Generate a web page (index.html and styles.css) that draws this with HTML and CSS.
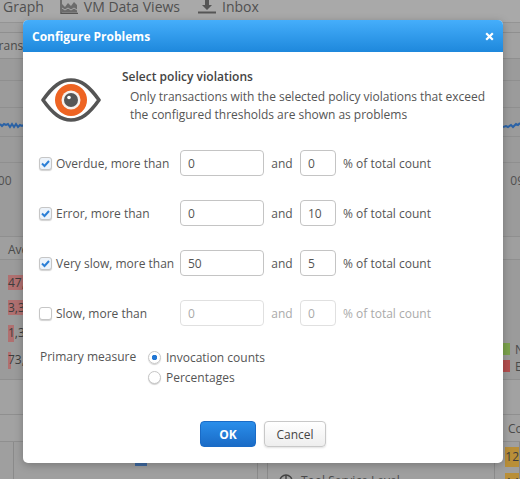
FILE: index.html
```html
<!DOCTYPE html>
<html lang="en">
<head>
    <meta charset="UTF-8">
    <meta name="viewport" content="width=device-width, initial-scale=1.0">
    <title>Configure Problems</title>
    <link rel="stylesheet" href="styles.css">
</head>
<body>
    <div class="app">
        <nav class="nav">
            <span class="nav-item nav-graph">Graph</span>
            <span class="nav-item nav-views">
                <svg class="nav-icon" width="18" height="14" viewBox="0 0 18 14">
                    <path d="M1 0v13.5h17" fill="none" stroke="#555" stroke-width="1.4"/>
                    <path d="M2 4l3 3 3-4 3 3 3-4 3 3v7.500H2z" fill="#6b6b6b"/>
                    <path d="M2 8l3 2 3-2 3 2 3-2 3 2" fill="none" stroke="#aaa" stroke-width="1"/>
                </svg>
                VM Data Views
            </span>
            <span class="nav-item">
                <svg class="nav-icon" width="18" height="14" viewBox="0 0 18 14">
                    <path d="M7 0h4v5h3l-5 5-5-5h3z" fill="#555"/>
                    <path d="M0 11.500h18v2H0z" fill="#555"/>
                </svg>
                Inbox
            </span>
        </nav>
        <div class="strip strip-tabs"></div>
        <div class="strip strip-title"><span class="clip-left">Transactions</span></div>
        <div class="strip strip-a"></div>
        <div class="strip strip-b"></div>
        <div class="strip strip-chart">
            <svg width="24" height="14" viewBox="0 0 24 14">
                <path d="M0 6l2 2 2-2 2 1 2-1 2 3 2-3 2 3 2-3 2 3 2-2 2 1 2-1" fill="none" stroke="#2a62a6" stroke-width="2"/>
            </svg>
            <svg width="17" height="14" viewBox="0 0 17 14">
                <path d="M0 9l3-1 2 1 3-2 2 2 3-3 2 1 2-2" fill="none" stroke="#2a62a6" stroke-width="2"/>
            </svg>
        </div>
        <div class="strip strip-c"></div>
        <div class="strip strip-axis">
            <span class="axis-left">100</span>
            <span class="axis-right">09</span>
        </div>
        <div class="strip strip-head"><span class="head-left">Average</span></div>
        <div class="strip strip-table">
            <div class="bars">
                <div class="bar bar-full">47,2</div>
                <div class="bar bar-full">3,37</div>
                <div class="bar bar-small">1,30</div>
                <div class="bar bar-tiny">73,5</div>
                <div class="bar bar-tiny bar-last"></div>
            </div>
            <div class="legend">
                <div class="legend-row"><span class="swatch swatch-green"></span>N</div>
                <div class="legend-row"><span class="swatch swatch-red"></span>E</div>
            </div>
        </div>
        <div class="strip strip-gap"></div>
        <div class="strip strip-foot"><span class="foot-right">Count</span></div>
        <div class="lower">
            <div class="col col-a"></div>
            <div class="col col-b"><span class="spark"></span></div>
            <div class="col col-c">
                <svg class="tool-icon" width="14" height="14" viewBox="0 0 14 14">
                    <circle cx="7" cy="7" r="6" fill="none" stroke="#444" stroke-width="1.500"/>
                    <path d="M7 1v6" stroke="#444" stroke-width="1.500"/>
                </svg>
                Tool Service Level
            </div>
            <div class="col col-d">
                <span class="count">12</span>
                <span class="count">14</span>
            </div>
        </div>
    </div>

    <div class="modal">
        <div class="modal-header">
            <span class="modal-title">Configure Problems</span>
            <svg class="modal-close" width="9" height="9" viewBox="0 0 9 9">
                <path d="M1.200 1.200l6.600 6.600M7.800 1.200L1.200 7.800" stroke="#fff" stroke-width="2.200"/>
            </svg>
        </div>
        <div class="modal-body">
            <div class="intro">
                <svg class="eye" width="60" height="44" viewBox="0 0 60 44">
                    <path d="M2 22C12 8 20 2 30 2s18 6 28 20C48 36 40 42 30 42S12 36 2 22z" fill="#fff" stroke="#555" stroke-width="3.600" stroke-linejoin="round"/>
                    <circle cx="30" cy="22" r="16" fill="#ee6423"/>
                    <circle cx="30" cy="22" r="9.500" fill="#f6f1ee"/>
                    <circle cx="30" cy="22" r="7" fill="#565656"/>
                    <circle cx="28" cy="19.500" r="1.800" fill="#fff"/>
                </svg>
                <div class="intro-text">
                    <h2>Select policy violations</h2>
                    <p>Only transactions with the selected policy violations that exceed the configured thresholds are shown as problems</p>
                </div>
            </div>

            <div class="rule">
                <label class="rule-label"><input type="checkbox" checked>Overdue, more than</label>
                <input class="field field-wide" type="text" value="0">
                <span class="rule-and">and</span>
                <input class="field field-narrow" type="text" value="0">
                <span>% of total count</span>
            </div>
            <div class="rule">
                <label class="rule-label"><input type="checkbox" checked>Error, more than</label>
                <input class="field field-wide" type="text" value="0">
                <span class="rule-and">and</span>
                <input class="field field-narrow" type="text" value="10">
                <span>% of total count</span>
            </div>
            <div class="rule">
                <label class="rule-label"><input type="checkbox" checked>Very slow, more than</label>
                <input class="field field-wide" type="text" value="50">
                <span class="rule-and">and</span>
                <input class="field field-narrow" type="text" value="5">
                <span>% of total count</span>
            </div>
            <div class="rule rule-off">
                <label class="rule-label"><input type="checkbox">Slow, more than</label>
                <input class="field field-wide" type="text" value="0" disabled>
                <span class="rule-and">and</span>
                <input class="field field-narrow" type="text" value="0" disabled>
                <span>% of total count</span>
            </div>

            <div class="measure">
                <span class="measure-title">Primary measure</span>
                <div class="measure-options">
                    <label><input type="radio" name="measure" checked>Invocation counts</label>
                    <label><input type="radio" name="measure">Percentages</label>
                </div>
            </div>
        </div>
        <div class="modal-footer">
            <button class="btn btn-primary">OK</button>
            <button class="btn btn-default">Cancel</button>
        </div>
    </div>
</body>
</html>
```

FILE: styles.css
```css
* {
    box-sizing: border-box;
}
html, body {
    height: 100%;
}
body {
    margin: 0;
    overflow: hidden;
    position: relative;
    font-family: 'Open Sans', sans-serif;
    font-size: 12px;
    color: #555;
    background-color: #9b9b9b;
}

/* dimmed page behind the dialog */
.app {
    height: 479px;
    display: flex;
    flex-direction: column;
    overflow: hidden;
    color: #4a4a4a;
}
.nav {
    height: 23px;
    flex: none;
    display: flex;
    align-items: flex-start;
    padding-left: 3px;
    background-color: #a9a9a9;
    border-bottom: 1px solid #949494;
    font-size: 14px;
    line-height: 14px;
    color: #505050;
    overflow: hidden;
}
.nav-item {
    display: flex;
    align-items: flex-start;
    gap: 6px;
    margin-right: 18px;
}
.nav-graph {
    margin-right: 16px;
}
.nav-icon {
    flex: none;
}
.strip {
    flex: none;
    display: flex;
    justify-content: space-between;
    border-bottom: 1px solid #8f8f8f;
}
.strip-tabs { height: 10px; background-color: #a2a2a2; }
.strip-title { height: 26px; background-color: #a2a2a2; align-items: center; }
.strip-a { height: 22px; }
.strip-b { height: 27px; }
.strip-chart { height: 29px; align-items: center; padding-top: 6px; }
.strip-c { height: 26px; }
.strip-axis { height: 74px; padding-top: 9px; font-size: 12px; line-height: 18px; color: #505050; }
.strip-head { height: 23px; padding-top: 3px; align-items: center; background-color: #9f9f9f; }
.strip-table { height: 120px; }
.strip-gap { height: 35px; background-color: #a2a2a2; }
.strip-foot { height: 27px; align-items: center; justify-content: flex-end; background-color: #a2a2a2; }
.clip-left {
    margin-left: -8px;
}
.axis-left {
    margin-left: -9px;
}
.axis-right {
    margin-right: -4px;
}
.head-left {
    margin-left: 8px;
}
.foot-right {
    width: 12px;
    white-space: nowrap;
}

.bars {
    width: 23px;
    padding: 15px 0 0 8px;
    overflow: hidden;
    flex: none;
}
.bar {
    height: 15px;
    margin-bottom: 10px;
    line-height: 15px;
    white-space: nowrap;
    color: #3d3d3d;
    background-color: #b07070;
}
.bar-full { width: 15px; }
.bar-small { width: 6px; height: 17px; }
.bar-tiny { width: 3px; height: 17px; }
.bar-last { height: 5px; margin-bottom: 0; }
.legend {
    width: 17px;
    padding-top: 83px;
    overflow: hidden;
}
.legend-row {
    display: flex;
    align-items: center;
    gap: 5px;
    height: 12px;
    margin-bottom: 5px;
}
.swatch {
    width: 7px;
    height: 12px;
    flex: none;
}
.swatch-green { background-color: #7ba24c; }
.swatch-red { background-color: #b34e4e; }

.lower {
    flex: 1;
    display: flex;
    background-color: #9f9f9f;
}
.col {
    border-right: 1px solid #8a8a8a;
}
.col-a { width: 14px; }
.col-b {
    width: 245px;
    padding: 21px 0 0 121px;
}
.spark {
    display: block;
    width: 12px;
    height: 3px;
    background-color: #3f6aa0;
}
.col-c {
    width: 230px;
    margin-left: 9px;
    border-left: 1px solid #8a8a8a;
    padding: 32px 0 0 11px;
    display: flex;
    gap: 8px;
    line-height: 14px;
    white-space: nowrap;
    overflow: hidden;
}
.tool-icon {
    flex: none;
}
.col-d {
    flex: 1;
    padding: 5px 0 0 10px;
    display: flex;
    flex-direction: column;
    gap: 6px;
}
.count {
    height: 20px;
    line-height: 20px;
    background-color: #b98f38;
    color: #3d3d3d;
    white-space: nowrap;
}

/* dialog */
.modal {
    position: absolute;
    left: 23px;
    top: 20px;
    width: 480px;
    height: 443px;
    display: flex;
    flex-direction: column;
    background-color: #fff;
    border-radius: 5px;
    overflow: hidden;
    box-shadow: 0 2px 8px rgba(0, 0, 0, 0.25);
}
.modal-header {
    height: 32px;
    flex: none;
    display: flex;
    justify-content: space-between;
    align-items: center;
    padding: 0 9px;
    background: linear-gradient(to bottom, #45aefb, #1e88dc);
}
.modal-title {
    color: #fff;
    font-size: 12px;
    font-weight: 700;
}
.modal-close {
    display: block;
}
.modal-body {
    flex: 1;
    padding: 16px 17px 0 16px;
}
.intro {
    display: flex;
    align-items: flex-start;
    height: 82px;
}
.eye {
    margin: 10px 21px 0 2px;
    flex: none;
}
.intro-text h2 {
    margin: 0;
    font-size: 12px;
    line-height: 18px;
    font-weight: 600;
    color: #444;
}
.intro-text p {
    margin: 2px 0 0 8px;
    line-height: 18px;
    width: 366px;
    letter-spacing: -0.02px;
}
.rule {
    height: 26px;
    margin-bottom: 24px;
    display: flex;
    align-items: center;
}
.rule-label {
    width: 141px;
    flex: none;
    display: flex;
    align-items: center;
    white-space: nowrap;
}
.rule-and {
    width: 36px;
    text-align: center;
}
.field {
    height: 26px;
    padding: 0 7px;
    font-family: inherit;
    font-size: 12px;
    color: #555;
    background-color: #fff;
    border: 1px solid #c4c4c4;
    border-radius: 4px;
    outline: none;
}
.field-wide {
    width: 84px;
}
.field-narrow {
    width: 36px;
    margin-right: 7px;
}
.rule-off {
    color: #aaa;
}
.rule-off .rule-label {
    color: #555;
}
.rule-off .field {
    color: #aaa;
    border-color: #e0e0e0;
}
input[type="checkbox"],
input[type="radio"] {
    appearance: none;
    flex: none;
    width: 13px;
    height: 13px;
    margin: 0 4px 0 0;
    background-color: #fff;
    border: 1px solid #c6c6c6;
    box-shadow: 0 1px 1px rgba(0, 0, 0, 0.18);
}
input[type="checkbox"] {
    border-radius: 3px;
}
input[type="checkbox"]:checked {
    background: #edf3fa url("data:image/svg+xml,%3Csvg xmlns='http://www.w3.org/2000/svg' viewBox='0 0 11 11'%3E%3Cpath d='M2 5.500l2.500 2.500L9 3' fill='none' stroke='%232b7fd6' stroke-width='2'/%3E%3C/svg%3E") center / 11px 11px no-repeat;
}
input[type="radio"] {
    border-radius: 50%;
    margin-right: 5px;
}
input[type="radio"]:checked {
    background: radial-gradient(circle, #2277d4 0, #2277d4 2.500px, #fff 3px);
}
.measure {
    display: flex;
    align-items: flex-start;
    margin-top: -3px;
}
.measure-title {
    width: 109px;
    padding-left: 1px;
    line-height: 20px;
    flex: none;
}
.measure-options {
    display: flex;
    flex-direction: column;
}
.measure-options label {
    height: 20px;
    display: flex;
    align-items: center;
}
.modal-footer {
    flex: none;
    display: flex;
    justify-content: center;
    gap: 8px;
    padding-bottom: 16px;
}
.btn {
    height: 26px;
    font-family: inherit;
    font-size: 12px;
    border-radius: 4px;
    cursor: pointer;
}
.btn-primary {
    width: 56px;
    color: #fff;
    font-weight: 700;
    background: linear-gradient(to bottom, #2a8eea, #1a6bc6);
    border: 1px solid #1a6bc6;
}
.btn-default {
    width: 62px;
    color: #444;
    background: linear-gradient(to bottom, #fff, #eee);
    border: 1px solid #c8c8c8;
    box-shadow: 0 1px 2px rgba(0, 0, 0, 0.12);
}
```
